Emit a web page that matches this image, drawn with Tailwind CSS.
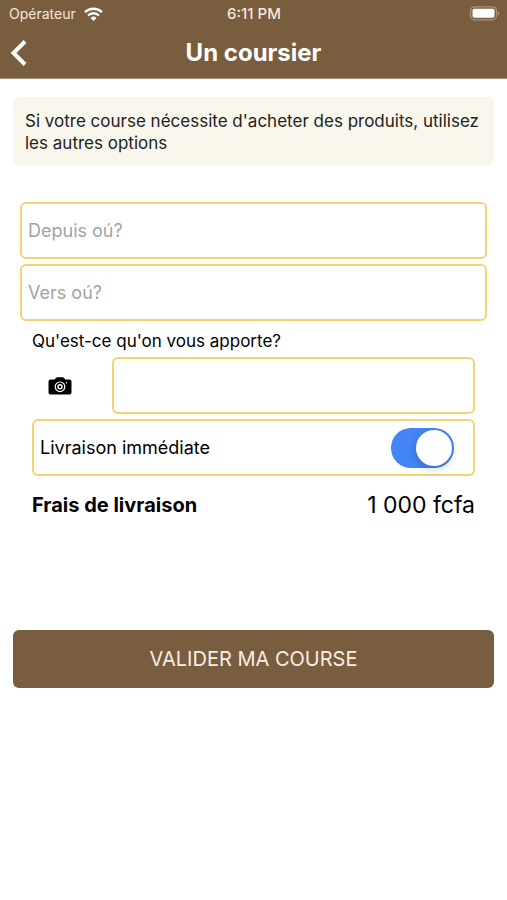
<!DOCTYPE html>
<html lang="fr">
<head>
<meta charset="utf-8">
<meta name="viewport" content="width=device-width, initial-scale=1">
<title>Un coursier</title>
<script src="https://cdn.jsdelivr.net/npm/@tailwindcss/browser@4"></script>
</head>
<body class="min-h-screen bg-white font-['Inter','Liberation_Sans',sans-serif] text-black">
<header class="border-b border-[#a8967f] bg-[#795d3f] text-white">
  <div class="grid h-7 grid-cols-3 items-center pr-2 pl-[9px] text-sm text-[#f3e9dc]">
    <div class="flex items-center gap-2">
      <span>Opérateur</span>
      <svg class="h-[14px] w-[19px] text-white" viewBox="0 0 19 14" fill="none" stroke="currentColor" stroke-width="2.4" aria-hidden="true">
        <path d="M1 5.1a12.3 12.3 0 0 1 17 0"/>
        <path d="M4 8.5a8 8 0 0 1 11 0"/>
        <path d="M9.500 13.900 6.500 10.900a4.300 4.300 0 0 1 6 0Z" fill="currentColor" stroke="none"/>
      </svg>
    </div>
    <span class="text-center text-[15px] font-medium">6:11 PM</span>
    <svg class="h-4 w-8 justify-self-end" viewBox="0 0 32 16" aria-hidden="true">
      <rect x="3.500" y=".8" width="26" height="13" rx="4" fill="none" stroke="#a8947d" stroke-width="1.300"/>
      <rect x="5.500" y="2.800" width="22" height="9" rx="1.800" fill="#fff"/>
      <path d="M30.800 5.100q1.200.7 1.200 2.200t-1.200 2.200Z" fill="#b5a38e"/>
    </svg>
  </div>
  <div class="grid h-[50px] grid-cols-[40px_1fr_40px] items-center">
    <button type="button" aria-label="Retour" class="flex h-full items-center pl-[10px]">
      <svg class="h-7 w-[18px]" viewBox="0 0 18 28" fill="none" stroke="currentColor" stroke-width="4" aria-hidden="true"><path d="M15 2.500 3.500 14 15 25.500"/></svg>
    </button>
    <h1 class="text-center text-2xl font-bold">Un coursier</h1>
  </div>
</header>
<main class="px-[13px] pt-[18px]">
  <p class="rounded-md bg-[#f9f7ec] px-3 pt-[13px] pb-3 text-[17px] leading-[22px] text-[#222]">Si votre course nécessite d'acheter des produits, utilisez les autres options</p>
  <form class="pt-9">
    <div class="flex flex-col gap-[5px] px-[7px]">
      <input type="text" aria-label="Depuis oú?" placeholder="Depuis oú?" class="h-[57px] w-full rounded-md border-2 border-[#f5d372] px-1.5 text-lg placeholder:text-[#a3a3a3]">
      <input type="text" aria-label="Vers oú?" placeholder="Vers oú?" class="h-[57px] w-full rounded-md border-2 border-[#f5d372] px-1.5 text-lg placeholder:text-[#a3a3a3]">
      <div class="flex flex-col gap-[5px] px-3">
        <div>
          <label for="item" class="block pt-1 pb-[5px] text-[17px] leading-[22px]">Qu'est-ce qu'on vous apporte?</label>
          <div class="flex items-center">
            <button type="button" aria-label="Ajouter une photo" class="flex h-[57px] w-20 shrink-0 items-center pl-4">
              <svg class="h-[18px] w-6" viewBox="0 0 24 18" aria-hidden="true">
                <path d="M2.500 2.500H6.500L8.500.6Q9 .2 9.700.2h4.600q.7 0 1.200.4l2 1.900h4Q23.500 2.500 23.500 4.500v11q0 2-2 2h-19q-2 0-2-2v-11q0-2 2-2Z"/>
                <circle cx="12" cy="9.800" r="4.800" fill="none" stroke="#fff" stroke-width="1.200"/>
                <circle cx="12" cy="9.800" r="2" fill="none" stroke="#fff" stroke-width="1.500"/>
                <circle cx="18.500" cy="5.800" r=".7" fill="#fff"/>
              </svg>
            </button>
            <input id="item" type="text" class="h-[57px] min-w-0 flex-1 rounded-md border-2 border-[#f5d372] px-1.5 text-lg">
          </div>
        </div>
        <label class="flex h-[57px] items-center justify-between rounded-md border-2 border-[#f5d372] pr-[19px] pl-1.5 text-lg">
          <span>Livraison immédiate</span>
          <input type="checkbox" role="switch" checked class="flex h-10 w-[63px] appearance-none items-center rounded-full bg-[#d4d4d4] px-0.5 before:size-9 before:rounded-full before:bg-white before:shadow-[0_3px_8px_rgba(0,0,0,0.2)] checked:justify-end checked:bg-[#4385f4]">
        </label>
        <div class="flex h-12 items-center justify-between">
          <span class="text-xl font-bold">Frais de livraison</span>
          <span class="text-[23px]">1 000 fcfa</span>
        </div>
      </div>
    </div>
    <button type="submit" class="mt-[101px] h-[58px] w-full rounded-md bg-[#795d3f] text-xl text-[#f8eee4]">VALIDER MA COURSE</button>
  </form>
</main>
</body>
</html>
